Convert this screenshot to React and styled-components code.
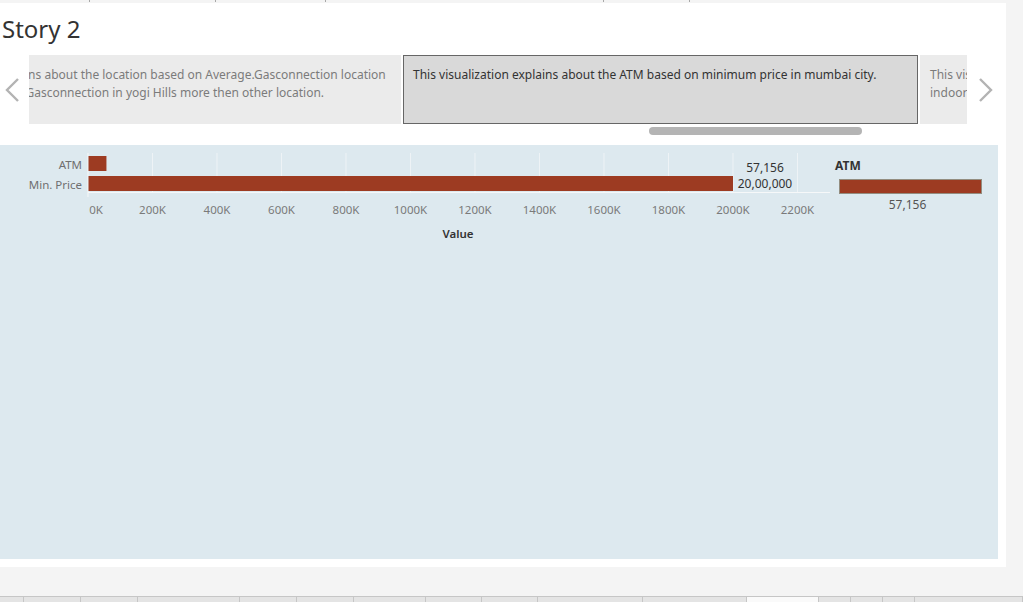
import React from "react";
import styled, { createGlobalStyle } from "styled-components";

const GlobalStyle = createGlobalStyle`
  html, body {
    margin: 0;
    padding: 0;
    background: #f4f4f4;
    font-family: "Noto Sans", "Open Sans", sans-serif;
  }
`;

const stories = [
  {
    text:
      "This visualization explains about the location based on Average.Gasconnection location\nwhich shows the more Gasconnection in yogi Hills more then other location.",
  },
  {
    text: "This visualization explains about the ATM based on minimum price in mumbai city.",
    active: true,
  },
  {
    text:
      "This visualization explains about the Gasconnection based on\nindoor and outdoor location in mumbai city.",
  },
];

const topTabs = [90, 126, 110, 278, 86];
const bottomTabs = [24, 57, 57, 102, 57, 57, 72, 56, 56, 105, 104, 72, 32, 32, 32];
const ACTIVE_TAB = 11;

const bars = [
  { label: "ATM", value: 57156 },
  { label: "Min. Price", value: 2000000 },
];

const AXIS_X = 88;
const PX_PER_K = 64.5 / 200;

function Chevron({ dir }) {
  const d = dir === "left" ? "M14 2 L3 13 L14 24" : "M2 2 L13 13 L2 24";
  return (
    <svg width="16" height="26" viewBox="0 0 16 26">
      <path d={d} fill="none" stroke="#b3b3b3" strokeWidth="2.4" />
    </svg>
  );
}

function BarChart() {
  const ticks = Array.from({ length: 12 }, (_, i) => i * 200);
  return (
    <svg width="830" height="100" viewBox="0 0 830 100">
      {ticks.slice(1).map((t) => (
        <line
          key={t}
          x1={AXIS_X + t * PX_PER_K}
          x2={AXIS_X + t * PX_PER_K}
          y1="8"
          y2="48"
          stroke="#eef3f6"
          strokeWidth="1"
        />
      ))}
      <line x1={AXIS_X} x2={AXIS_X} y1="8" y2="52" stroke="#f6f8f9" strokeWidth="1" />
      <line x1={AXIS_X} x2="830" y1="47.5" y2="47.5" stroke="#f6f8f9" strokeWidth="1" />

      {bars.map((b, i) => (
        <g key={b.label}>
          <text
            x="82"
            y={19 + i * 20}
            textAnchor="end"
            dominantBaseline="central"
            fontSize="11.5"
            fill="#6f6f6f"
          >
            {b.label}
          </text>
          <rect
            x={AXIS_X + 0.5}
            y={11 + i * 20}
            width={(b.value / 1000) * PX_PER_K - 0.5}
            height="15"
            fill="#9d3b22"
          />
        </g>
      ))}

      <text x="765" y="22" textAnchor="middle" dominantBaseline="central" fontSize="12" fill="#333">
        57,156
      </text>
      <text x="765" y="38" textAnchor="middle" dominantBaseline="central" fontSize="12" fill="#333">
        20,00,000
      </text>

      {ticks.map((t) => (
        <text
          key={t}
          x={t === 0 ? 96 : AXIS_X + t * PX_PER_K}
          y="64"
          textAnchor="middle"
          dominantBaseline="central"
          fontSize="11.5"
          fill="#7a7a7a"
        >
          {t}K
        </text>
      ))}

      <text x="458" y="88" textAnchor="middle" dominantBaseline="central" fontSize="11.5" fontWeight="600" fill="#333">
        Value
      </text>
    </svg>
  );
}

export default function App() {
  return (
    <Page>
      <GlobalStyle />
      <TopStrip>
        {topTabs.map((w, i) => (
          <TopTab key={i} $w={w} />
        ))}
      </TopStrip>

      <Body>
        <Sheet>
          <Title>Story 2</Title>

          <Navigator>
            <Arrow $side="left">
              <Chevron dir="left" />
            </Arrow>
            <Viewport>
              <Track $offset={-143}>
                {stories.map((s, i) => (
                  <StoryCard key={i} $active={s.active}>
                    {s.text}
                  </StoryCard>
                ))}
              </Track>
            </Viewport>
            <Arrow $side="right">
              <Chevron dir="right" />
            </Arrow>
          </Navigator>

          <ScrollRow>
            <ScrollTrack>
              <ScrollThumb style={{ marginLeft: 620, width: 213 }} />
            </ScrollTrack>
          </ScrollRow>

          <ChartPane>
            <BarChart />
            <SidePanel>
              <SideTitle>ATM</SideTitle>
              <SideBar />
              <SideValue>57,156</SideValue>
            </SidePanel>
          </ChartPane>
        </Sheet>
        <Gutter />
      </Body>

      <BottomGap />

      <TabBar>
        {bottomTabs.map((w, i) => (
          <SheetTab key={i} $w={w} $active={i === ACTIVE_TAB} />
        ))}
        <SheetTab $grow />
      </TabBar>
    </Page>
  );
}

const Page = styled.div`
  width: 1023px;
  height: 602px;
  display: flex;
  flex-direction: column;
  overflow: hidden;
  background: #f4f4f4;
`;

const TopStrip = styled.div`
  height: 3px;
  display: flex;
`;

const TopTab = styled.div`
  width: ${(p) => p.$w}px;
  height: 2px;
  border-right: 1px solid #a8a8a8;
  box-sizing: border-box;
`;

const Body = styled.div`
  display: flex;
  height: 564px;
`;

const Sheet = styled.div`
  width: 1006px;
  background: #fff;
  display: flex;
  flex-direction: column;
`;

const Gutter = styled.div`
  flex: 1;
`;

const Title = styled.div`
  height: 52px;
  box-sizing: border-box;
  padding: 10px 0 0 2px;
  font-size: 24px;
  line-height: 32px;
  color: #333;
`;

const Navigator = styled.div`
  display: flex;
  height: 69px;
`;

const Arrow = styled.div`
  width: ${(p) => (p.$side === "left" ? 29 : 39)}px;
  display: flex;
  align-items: center;
  justify-content: ${(p) => (p.$side === "left" ? "flex-start" : "center")};
  padding-left: ${(p) => (p.$side === "left" ? 4 : 0)}px;
  padding-right: ${(p) => (p.$side === "right" ? 2 : 0)}px;
  box-sizing: border-box;
`;

const Viewport = styled.div`
  width: 938px;
  overflow: hidden;
`;

const Track = styled.div`
  display: flex;
  gap: 2px;
  height: 100%;
  transform: translateX(${(p) => p.$offset}px);
`;

const StoryCard = styled.div`
  flex: 0 0 515px;
  box-sizing: border-box;
  padding: 10px 9px 9px;
  border: 1px solid ${(p) => (p.$active ? "#666" : "transparent")};
  background: ${(p) => (p.$active ? "#d9d9d9" : "#ebebeb")};
  color: ${(p) => (p.$active ? "#333" : "#7b7b7b")};
  font-size: 12px;
  line-height: 18px;
  white-space: pre-line;
  overflow: hidden;
`;

const ScrollRow = styled.div`
  height: 21px;
  padding: 3px 0 0 29px;
  box-sizing: border-box;
`;

const ScrollTrack = styled.div`
  width: 938px;
  display: flex;
`;

const ScrollThumb = styled.div`
  height: 8px;
  border-radius: 4px;
  background: #b4b4b4;
`;

const ChartPane = styled.div`
  width: 998px;
  height: 414px;
  background: #dde9ef;
  display: flex;
  align-items: flex-start;
`;

const SidePanel = styled.div`
  margin-left: 5px;
  padding-top: 13px;
  display: flex;
  flex-direction: column;
`;

const SideTitle = styled.div`
  font-size: 12px;
  line-height: 16px;
  font-weight: 700;
  color: #333;
`;

const SideBar = styled.div`
  width: 143px;
  height: 15px;
  margin: 5px 0 0 4px;
  box-sizing: border-box;
  background: #9d3b22;
  border: 1px solid #938d80;
`;

const SideValue = styled.div`
  width: 143px;
  margin: 3px 0 0 1px;
  text-align: center;
  font-size: 12px;
  line-height: 16px;
  color: #555;
`;

const BottomGap = styled.div`
  height: 29px;
`;

const TabBar = styled.div`
  display: flex;
  height: 6px;
  border-top: 1px solid #c6c6c6;
  box-sizing: border-box;
`;

const SheetTab = styled.div`
  ${(p) => (p.$grow ? "flex: 1;" : `width: ${p.$w}px;`)}
  box-sizing: border-box;
  background: ${(p) => (p.$active ? "#fafafa" : "#e4e4e4")};
  border-right: 1px solid #c6c6c6;
`;
